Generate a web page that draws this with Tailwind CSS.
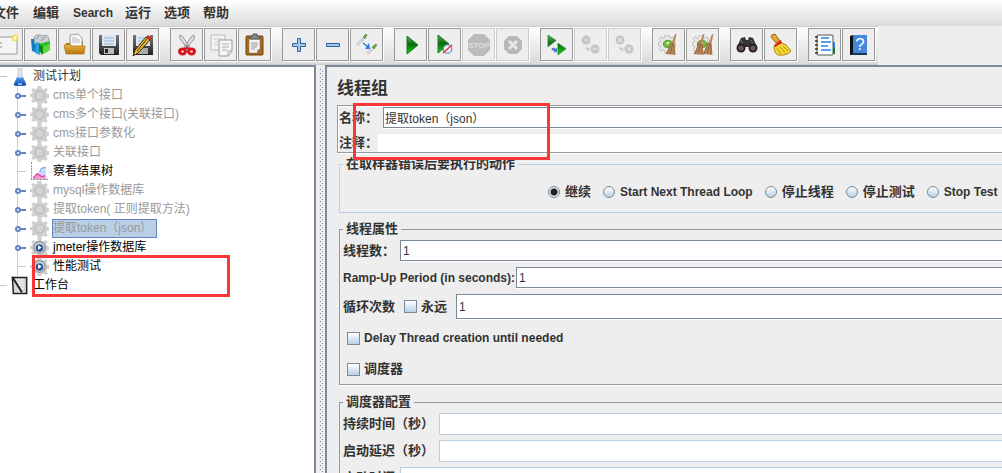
<!DOCTYPE html>
<html lang="zh-CN">
<head>
<meta charset="utf-8">
<title>Apache JMeter</title>
<script src="https://cdn.jsdelivr.net/npm/@tailwindcss/browser@4"></script>
</head>
<body class="flex h-screen flex-col overflow-hidden bg-[#eee] font-['Liberation_Sans','Noto_Sans_CJK_SC',sans-serif] text-xs text-[#333]">
<svg class="absolute size-0" aria-hidden="true">
  <defs>
    <linearGradient id="green" x1="0" y1="0" x2="0" y2="1"><stop offset="0" stop-color="#5fae5f"/><stop offset=".45" stop-color="#0b6a10"/><stop offset="1" stop-color="#12d312"/></linearGradient>
    <linearGradient id="gold" x1="0" y1="0" x2="0" y2="1"><stop offset="0" stop-color="#e8b544"/><stop offset="1" stop-color="#b9780c"/></linearGradient>
    <linearGradient id="steel" x1="0" y1="0" x2="0" y2="1"><stop offset="0" stop-color="#777"/><stop offset="1" stop-color="#222"/></linearGradient>
    <linearGradient id="flask" x1="0" y1="0" x2="0" y2="1"><stop offset="0" stop-color="#4a9cf0"/><stop offset="1" stop-color="#0b3fa8"/></linearGradient>
    <pattern id="dots" width="4" height="4" patternUnits="userSpaceOnUse"><path d="M0 0h1v1H0Zm2 2h1v1H2Z" fill="#7a8a99"/></pattern>
    <path id="play" d="M1 0 12 9 1 18Z"/>
    <path id="cog" d="M8 0h4l.6 2.800 1.700.7L16.700 2l2 2-1.500 2.400.7 1.700 2.100.600v3.600l-2.100.600-.7 1.700 1.500 2.400-2 2-2.400-1.500-1.700.7L12 20H8l-.6-2.800-1.700-.7L3.300 18l-2-2 1.500-2.400-.7-1.700L0 11.300V8.700l2.100-.600.7-1.700L1.300 4l2-2 2.400 1.500 1.700-.7Z"/>
    <symbol id="i-gear-off" viewBox="0 0 20 20"><use href="#cog" fill="#d0d0d0"/><circle cx="10" cy="10" r="5.500" fill="#c0c0c0"/><circle cx="10" cy="10" r="3.800" fill="#d3d3d3"/></symbol>
    <symbol id="i-gear" viewBox="0 0 20 20"><use href="#cog" fill="#cfcfcf"/><circle cx="10" cy="10" r="6.500" fill="#7d7d7d"/><circle cx="10" cy="10" r="5.500" fill="#cfdcee"/><circle cx="10" cy="10.500" r="4" fill="#2f5590"/><path d="m8.500 7.500 4 2.500-4 2.500Z" fill="#fff"/></symbol>
    <symbol id="i-flask" viewBox="0 0 14 18"><path d="M5 0h4v7l4 9q.5 2-1.500 2h-9Q.5 18 1 16l4-9Z" fill="#dfe4ea" stroke="#aab2bc" stroke-width=".6"/><path d="M4 9.500h6l3 6.500q.4 1.800-1.500 1.800h-9Q.6 17.800 1 16Z" fill="url(#flask)"/><path d="M5 15h4v2H5z" fill="#6db8ff"/></symbol>
    <symbol id="i-chart" viewBox="0 0 18 18"><path d="M1.500 0v16.500H17" fill="none" stroke="#888" stroke-dasharray="2 1"/><path d="m8 12 3-4 4-3v9H8Z" fill="#c4dcfa"/><path d="m3 15 4-5 4 5 3-3 2 4H3Z" fill="#f59bd5"/><path d="m3 15 4-4 4 3 3-1" fill="none" stroke="#d63eae" stroke-width="1.200"/><path d="m9 10 2-4 4-1" fill="none" stroke="#7aa2e8" stroke-width="1.200"/></symbol>
    <symbol id="i-pad" viewBox="0 0 18 20"><path d="M1 1.500h15v17H2Z" fill="#d9d9d9" stroke="#222" stroke-width="1.600"/><path d="M4 4h9M4 7h9M6 10h7M8 13h5" stroke="#f6f6f6"/><path d="m1 1 10 16" stroke="#222" stroke-width="2"/></symbol>
    <symbol id="i-tiny-play" viewBox="0 0 22 22"><path d="m1 0 9 6-9 7Zm11 9 9 6-9 7Z" fill="url(#green)" stroke="#176e1b" stroke-width=".6"/><path d="M5 15q2-2 4 0l2-1v5H7l1-1q-1-2-3-1Z" fill="#557fc0"/></symbol>
    <symbol id="i-broom" viewBox="0 0 12 22"><path d="m10 0 1.500.5L9.500 9l1 12L0 20q4-4 5-11l2-1Z" fill="#b88b5c"/><path d="m6 9-4 11M8 9 5 20M9 10v10" stroke="#80552d" stroke-width=".7"/></symbol>
    <symbol id="i-gearbig" viewBox="0 0 20 20"><use href="#cog" fill="#e7e7e7" stroke="#a5a5a5" stroke-width=".7"/><ellipse cx="11" cy="10" rx="5" ry="4" fill="#6fc13a" stroke="#4d8d25"/><circle cx="11" cy="9" r="1.500" fill="#d6f5b8"/></symbol>
  </defs>
</svg>

<nav class="flex h-[26px] shrink-0 items-center bg-linear-to-b from-white to-[#dadada] text-[13px] font-bold whitespace-nowrap" aria-label="菜单">
  <button class="-ml-[7px] w-10 text-left">文件</button>
  <button class="w-10 text-left">编辑</button>
  <button class="w-[52px] text-left text-xs">Search</button>
  <button class="w-[39px] text-left">运行</button>
  <button class="w-[39px] text-left">选项</button>
  <button class="text-left">帮助</button>
</nav>

<div role="toolbar" class="flex h-[39px] w-[878px] shrink-0 gap-2.5 overflow-hidden border-y border-[#ccc] bg-linear-to-b from-white to-[#dadada] pt-px [&_button]:mr-px [&_button]:flex [&_button]:size-[33px] [&_button]:shrink-0 [&_button]:items-center [&_button]:justify-center [&_button]:border [&_button]:border-[#999] [&_button]:bg-[#eee] [&_button]:shadow-[1px_1px_0_#fff] [&_button:disabled]:border-[#ccc] [&_svg]:overflow-visible">
  <div class="-ml-2.5 flex">
    <button aria-label="新建"><svg width="24" height="22"><path d="M-2 3h24v17H-2Z" fill="#f5f5f5" stroke="#999"/><path d="M6 8v2m0 2v2" stroke="#888"/><circle cx="20" cy="4" r="2.500" fill="#fff" stroke="#f5dc45" stroke-width="1.500"/></svg></button>
    <button aria-label="模板"><svg width="22" height="22"><path d="M1 5h7v14l-6-2Z" fill="#1876bd"/><path d="M4 3q2-3 6-2l2 1 4-1q3 1 3 5l-2 4H5Z" fill="#ccd0d2" stroke="#9aa3a9"/><path d="m6 5 3-3m2 5 4-4" stroke="#888"/><path d="m6 8 4 1v12l-5-2Z" fill="#23a6dc"/><path d="m9 10 11-3v9l-9 5Z" fill="#27c527"/><path d="m9 10 4 3v7l-4-3Z" fill="#118519"/><path d="m13 13 7-3v6l-7 4Z" fill="#59dd36"/></svg></button>
    <button aria-label="打开"><svg width="22" height="22"><path d="M2 9h3l1-2h13v13H2Z" fill="#a86d11"/><path d="m6 1 8-1 4 4v9H6Z" fill="#f8f8f8" stroke="#a0a0a0"/><path d="M8 4h5m-5 2h8m-8 2h8" stroke="#bbb"/><path d="m0 11 6-1 2 2h13l-1 8H2Z" fill="url(#gold)" stroke="#aa7114" stroke-width=".7"/></svg></button>
    <button aria-label="保存"><svg width="22" height="22"><path d="M1 1h20v20H3l-2-2Z" fill="url(#steel)"/><path d="M4 1h14v11H4Z" fill="#dce8f4"/><path d="M6 4h10M6 7h10M6 10h10" stroke="#9bb5cf"/><path d="M6 14h10v6H6Z" fill="#bbb"/><path d="M7 15h3v4H7Z" fill="#222"/></svg></button>
    <button aria-label="另存为"><svg width="22" height="22"><path d="M1 1h20v20H3l-2-2Z" fill="url(#steel)"/><path d="M4 1h14v11H4Z" fill="#dce8f4"/><path d="M6 4h10M6 7h10M6 10h10" stroke="#9bb5cf"/><path d="M6 14h10v6H6Z" fill="#aaa"/><path d="m14 3 4 3L6 19l-5 3 2-6Z" fill="#e9b832" stroke="#332611"/><path d="m15 5-10 12" stroke="#443000"/><path d="m14 3 2-2 4 3-2 2Z" fill="#d92522"/></svg></button>
  </div>
  <div class="flex">
    <button aria-label="剪切"><svg width="20" height="22"><path d="M3 1q-1 2 0 4l8 10 2-2L5 2ZM17 1q1 2 0 4L9 15l-2-2 8-11Z" fill="#ddd" stroke="#888" stroke-width=".8"/><circle cx="10" cy="12" r="1" fill="#666"/><ellipse cx="5.500" cy="17.500" rx="3" ry="2.500" fill="none" stroke="#d8131b" stroke-width="3"/><ellipse cx="14.500" cy="17.500" rx="3" ry="2.500" fill="none" stroke="#d8131b" stroke-width="3"/><path d="m7 15 3-1 3 1" fill="none" stroke="#d8131b" stroke-width="2"/></svg></button>
    <button aria-label="复制"><svg width="24" height="22"><path d="M2 1h14v15H2Z" fill="#f3f3f3" stroke="#bbb"/><path d="M5 5h8M5 8h4M5 11h4" stroke="#ccc"/><path d="M10 6h13v11l-4 5h-9Z" fill="#f6f6f6" stroke="#999"/><path d="M13 10h7m-7 3h7m-7 3h5m1 6v-5h4" fill="none" stroke="#aaa"/></svg></button>
    <button aria-label="粘贴"><svg width="20" height="22"><rect x="1" y="2" width="17" height="19" rx="1" fill="#ab681b" stroke="#744009"/><path d="M4 5h11v10l-3 4H4Z" fill="#f5f5f5" stroke="#777" stroke-width=".6"/><path d="M6 9h7m-7 2h7m-7 2h6m-6 2h4" stroke="#999"/><path d="M5 5V3l3-1V0h4v2l3 1v2Z" fill="#8b8b82" stroke="#555"/><path d="m12 19 .5-3.500H15Z" fill="#777"/></svg></button>
  </div>
  <div class="flex">
    <button aria-label="展开全部"><svg width="16" height="16"><path d="M6.500 1.500h3v5h5v3h-5v5h-3v-5h-5v-3h5Z" fill="#a5c9eb" stroke="#2a62a0"/></svg></button>
    <button aria-label="收起全部"><svg width="16" height="16"><path d="M1.500 6.500h13v3h-13Z" fill="#a5c9eb" stroke="#2a62a0"/></svg></button>
    <button aria-label="切换"><svg width="22" height="22"><path d="m1 11 7-7M11 20l6-6" stroke="#bbb" stroke-width="2.500"/><path d="m1 11 7-7M11 20l6-6" stroke="#f7f7f7"/><path d="m7 3 2 2 2-4-1-1Zm9 10 2 2 3-4-1-1Z" fill="#71a454" stroke="#5b8a48" stroke-width=".7"/><path d="m7 9 5 4" stroke="#257be8" stroke-width="1.500"/><path d="m13 9 1 6H9Z" fill="#257be8"/></svg></button>
  </div>
  <div class="flex">
    <button aria-label="启动"><svg class="ml-1" width="13" height="18"><use href="#play" fill="url(#green)" stroke="#187b1c"/></svg></button>
    <button aria-label="不停顿启动"><svg width="15" height="19"><use href="#play" fill="url(#green)" stroke="#187b1c"/><circle cx="10.500" cy="14" r="4.300" fill="#e7eef8" stroke="#5579af"/><path d="m6 18 9-8" stroke="#d92b2b" stroke-width="1.400"/></svg></button>
    <button disabled aria-label="停止"><svg width="24" height="24"><path d="M7 1h10l6 6v10l-6 6H7l-6-6V7Z" fill="#bbb"/><text x="12" y="15" text-anchor="middle" fill="#ddd" font-size="8" font-weight="bold">STOP</text></svg></button>
    <button disabled aria-label="关闭"><svg width="18" height="18"><path d="M5 0h8l5 5v8l-5 5H5l-5-5V5Z" fill="#b8b8b8"/><path d="m5 5 8 8m0-8-8 8" stroke="#e8e8e8" stroke-width="3"/></svg></button>
  </div>
  <div class="flex">
    <button aria-label="远程启动全部"><svg width="20" height="22"><use href="#i-tiny-play" width="20" height="20" y="1"/></svg></button>
    <button disabled aria-label="远程停止全部"><svg width="20" height="22"><circle cx="5" cy="6" r="4.500" fill="#c5c5c5"/><circle cx="14" cy="15" r="4.500" fill="#c5c5c5"/><path d="M2.500 6h5m4 9h5" stroke="#dedede" stroke-width="1.500"/><path d="m4 13 4 1 1 3-4-1Z" fill="#ccc"/></svg></button>
    <button disabled aria-label="远程关闭全部"><svg width="20" height="22"><circle cx="5" cy="6" r="4.500" fill="#c5c5c5"/><circle cx="14" cy="15" r="4.500" fill="#c5c5c5"/><path d="m3 4 4 4m0-4L3 8m9 5 4 4m0-4-4 4" stroke="#e3e3e3" stroke-width="1.300"/><path d="m4 13 4 1 1 3-4-1Z" fill="#ccc"/></svg></button>
  </div>
  <div class="flex">
    <button aria-label="清除"><svg width="22" height="22"><use href="#i-gearbig" width="18" height="18" y="1"/><use href="#i-broom" x="7" width="12" height="22"/></svg></button>
    <button aria-label="清除全部"><svg width="22" height="22"><use href="#i-gearbig" width="18" height="18" y="1"/><use href="#i-broom" x="1" width="12" height="22"/><use href="#i-broom" x="10" width="12" height="22"/></svg></button>
  </div>
  <div class="flex">
    <button aria-label="查找"><svg width="22" height="16"><path d="m5 1 4-1 1 3h2l1-3 4 1 4 9H1Z" fill="#333"/><path d="m5 3 2 5m8-5 2 4" stroke="#777"/><circle cx="5" cy="11" r="4.500" fill="#222"/><circle cx="17" cy="11" r="4.500" fill="#222"/><circle cx="5" cy="11" r="2.600" fill="#71564c"/><circle cx="17" cy="11" r="2.600" fill="#71564c"/></svg></button>
    <button aria-label="重置查找"><svg width="22" height="22"><path d="m2 1 3-1 5 7-4 2-5-6Z" fill="#e5a63a" stroke="#9a6114"/><path d="m10 8 6 3 5 6q-4 5-13 4-4-2-4-9Z" fill="#f5d835" stroke="#a7820b"/><path d="m7 14 4 6m-1-7 5 6m-2-7 5 5" stroke="#bb930d"/><path d="m4 11 7-5 1 3-7 4Z" fill="#df2425"/></svg></button>
  </div>
  <div class="flex">
    <button aria-label="函数助手"><svg width="22" height="22"><path d="M18 8h3v6h-3Z" fill="#258de9"/><path d="M18 14h3v6h-3Z" fill="#167a22"/><rect x="3" y="1" width="16" height="20" rx="1" fill="#fff" stroke="#555"/><path d="M7 4h8M7 8h10M7 12h7M7 16h10" stroke="#2680ea" stroke-width="1.300"/><path d="M1 3h3M1 7h3M1 11h3M1 15h3M1 19h3" stroke="#333" stroke-width="1.500"/></svg></button>
    <button aria-label="帮助"><svg width="20" height="22"><path d="m1 2 3-1v20H1Z" fill="#111"/><path d="M4 1h14v18H4Z" fill="#4486d8"/><path d="M3 19h15v2H3Z" fill="#203653"/><text x="11" y="16" text-anchor="middle" fill="#fff" font-size="17">?</text></svg></button>
  </div>
</div>

<main class="flex min-h-0 flex-1">
  <aside class="relative w-[316px] shrink-0 border-t-2 border-r-2 border-[#7a8a99] bg-white [&_svg]:shrink-0">
    <ul class="leading-[19px] whitespace-nowrap">
      <li>
        <div class="flex h-[19px] items-center"><span class="mr-1.5 h-px w-[7px] bg-[#a9c1dc]"></span><svg width="14" height="18"><use href="#i-flask"/></svg><span class="ml-1.5">测试计划</span></div>
        <ul class="ml-[17px] text-[#999] [&>li]:flex [&>li]:h-[19px] [&>li]:items-center [&>li]:border-l [&>li]:border-[#b8cfe5]">
          <li><i class="-ml-[3px] size-[6px] rounded-full border-2 border-[#6382bf] bg-white"></i><i class="mr-1 h-0.5 w-[5px] bg-[#6382bf]"></i><svg class="mr-1" width="19" height="19"><use href="#i-gear-off"/></svg>cms单个接口</li>
          <li><i class="-ml-[3px] size-[6px] rounded-full border-2 border-[#6382bf] bg-white"></i><i class="mr-1 h-0.5 w-[5px] bg-[#6382bf]"></i><svg class="mr-1" width="19" height="19"><use href="#i-gear-off"/></svg>cms多个接口(关联接口)</li>
          <li><i class="-ml-[3px] size-[6px] rounded-full border-2 border-[#6382bf] bg-white"></i><i class="mr-1 h-0.5 w-[5px] bg-[#6382bf]"></i><svg class="mr-1" width="19" height="19"><use href="#i-gear-off"/></svg>cms接口参数化</li>
          <li><i class="-ml-[3px] size-[6px] rounded-full border-2 border-[#6382bf] bg-white"></i><i class="mr-1 h-0.5 w-[5px] bg-[#6382bf]"></i><svg class="mr-1" width="19" height="19"><use href="#i-gear-off"/></svg>关联接口</li>
          <li class="text-black"><i class="mr-1 h-px w-2 bg-[#b8cfe5]"></i><svg class="mr-1" width="19" height="19"><use href="#i-chart"/></svg>察看结果树</li>
          <li><i class="-ml-[3px] size-[6px] rounded-full border-2 border-[#6382bf] bg-white"></i><i class="mr-1 h-0.5 w-[5px] bg-[#6382bf]"></i><svg class="mr-1" width="19" height="19"><use href="#i-gear-off"/></svg>mysql操作数据库</li>
          <li><i class="-ml-[3px] size-[6px] rounded-full border-2 border-[#6382bf] bg-white"></i><i class="mr-1 h-0.5 w-[5px] bg-[#6382bf]"></i><svg class="mr-1" width="19" height="19"><use href="#i-gear-off"/></svg>提取token( 正则提取方法)</li>
          <li><i class="-ml-[3px] size-[6px] rounded-full border-2 border-[#6382bf] bg-white"></i><i class="mr-1 h-0.5 w-[5px] bg-[#6382bf]"></i><svg class="mr-[3px]" width="19" height="19"><use href="#i-gear-off"/></svg><span class="border border-[#6382bf] bg-[#b8cfe5] pr-1 leading-[17px]">提取token（json）</span></li>
          <li class="text-black"><i class="-ml-[3px] size-[6px] rounded-full border-2 border-[#6382bf] bg-white"></i><i class="mr-1 h-0.5 w-[5px] bg-[#6382bf]"></i><svg class="mr-1" width="19" height="19"><use href="#i-gear"/></svg>jmeter操作数据库</li>
          <li class="text-black"><i class="mr-1 h-px w-2 bg-[#b8cfe5]"></i><svg class="mr-1" width="19" height="19"><use href="#i-gear"/></svg>性能测试</li>
        </ul>
      </li>
      <li class="flex h-[19px] items-center text-black"><span class="mr-1 h-px w-[7px] bg-[#b8cfe5]"></span><svg class="mr-1" width="18" height="19"><use href="#i-pad"/></svg>工作台</li>
    </ul>
    <div class="pointer-events-none absolute top-[188px] left-8 h-[42px] w-[198px] border-3 border-[#f93737]"></div>
  </aside>
  <svg class="h-full w-[9px] shrink-0" aria-hidden="true"><rect x="3" y="4" width="4" height="100%" fill="url(#dots)"/></svg>

  <section class="relative min-w-0 flex-1 overflow-hidden border-t-2 border-l-2 border-[#7a8a99] pl-2.5 [&_label]:shrink-0">
    <h1 class="pt-[9px] pb-1 text-[17px] leading-[25px] font-bold">线程组</h1>
    <div class="border border-r-0 border-[#999] shadow-[0_1px_0_#fff,inset_1px_1px_0_#fff]">
      <div class="flex h-[22px] items-center pt-px pl-px">
        <label for="name" class="w-11 text-[13px] font-bold">名称：</label>
        <input id="name" value="提取token（json）" class="h-[21px] min-w-0 flex-1 border border-r-0 border-[#7a8a99] bg-white px-px text-[#333] shadow-[0_1px_0_#fff]">
      </div>
      <div class="mt-1.5 flex h-[18px] items-center pl-px">
        <label for="comment" class="w-[39px] text-[13px] leading-[18px] font-bold">注释：</label>
        <input id="comment" class="h-[18px] min-w-0 flex-1 bg-white">
      </div>
    </div>
    <fieldset class="mt-[3px] ml-0.5 h-[57px] border border-t-0 border-r-0 border-[#b8cfe5]">
      <legend class="flex h-4 w-full items-center gap-[3px] text-[13px] leading-4 font-bold before:h-px before:w-[3px] before:bg-[#b8cfe5] after:h-px after:flex-1 after:bg-[#b8cfe5]">在取样器错误后要执行的动作</legend>
      <div class="mt-3 flex h-4 items-center gap-3 pl-[208px] text-[13px] leading-4 font-bold whitespace-nowrap [&_input]:size-3 [&_input]:shrink-0 [&_input]:appearance-none [&_input]:rounded-full [&_input]:border [&_input]:border-[#7a8a99] [&_input]:bg-linear-to-b [&_input]:from-white [&_input]:to-[#b8cfe5] [&_label]:flex [&_label]:items-center [&_label]:gap-[5px]">
        <label><input type="radio" name="err" checked class="checked:bg-[radial-gradient(#222_0_3px,#dfe9f3_4px)]">继续</label>
        <label class="text-xs"><input type="radio" name="err">Start Next Thread Loop</label>
        <label><input type="radio" name="err">停止线程</label>
        <label><input type="radio" name="err">停止测试</label>
        <label class="text-xs"><input type="radio" name="err">Stop Test</label>
      </div>
    </fieldset>
    <fieldset class="mt-2 ml-0.5 border border-t-0 border-r-0 border-[#999] pb-[7px] pl-[3px] text-[13px] font-bold shadow-[0_1px_0_#fff] [&_input]:font-normal [&_input]:text-xs [&_input[type=checkbox]]:size-[13px] [&_input[type=checkbox]]:shrink-0 [&_input[type=checkbox]]:appearance-none [&_input[type=checkbox]]:border [&_input[type=checkbox]]:border-[#7a8a99] [&_input[type=checkbox]]:bg-linear-to-b [&_input[type=checkbox]]:from-white [&_input[type=checkbox]]:to-[#b8cfe5]">
      <legend class="-ml-[3px] flex h-4 w-[calc(100%+3px)] items-center gap-[3px] leading-4 before:h-px before:w-[3px] before:bg-[#999] after:h-px after:flex-1 after:bg-[#999]">线程属性</legend>
      <div class="mt-[3px] flex h-[21px] items-center"><label for="threads" class="w-[57px]">线程数：</label><input id="threads" value="1" class="h-[21px] min-w-0 flex-1 border border-r-0 border-[#7a8a99] bg-white px-0.5 shadow-[0_1px_0_#fff]"></div>
      <div class="mt-1.5 flex h-[21px] items-center"><label for="ramp" class="w-[173px] text-xs">Ramp-Up Period (in seconds):</label><input id="ramp" value="1" class="h-[21px] min-w-0 flex-1 border border-r-0 border-[#7a8a99] bg-white px-0.5 shadow-[0_1px_0_#fff]"></div>
      <div class="mt-1.5 flex h-[25px] items-center"><label for="loops" class="w-[61px]">循环次数</label><label class="flex w-[52px] items-center gap-1"><input type="checkbox">永远</label><input id="loops" value="1" class="h-[25px] min-w-0 flex-1 border border-r-0 border-[#7a8a99] bg-white px-0.5 shadow-[0_1px_0_#fff]"></div>
      <label class="mt-[11px] ml-1 flex h-4 items-center gap-1 text-xs"><input type="checkbox">Delay Thread creation until needed</label>
      <label class="mt-[15px] ml-1 flex h-4 items-center gap-1 leading-4"><input type="checkbox">调度器</label>
    </fieldset>
    <fieldset class="mt-[9px] ml-0.5 border-l border-[#999] pl-[3px] text-[13px] font-bold">
      <legend class="-ml-[3px] flex h-4 w-[calc(100%+3px)] items-center gap-[3px] leading-4 before:h-px before:w-[3px] before:bg-[#999] after:h-px after:flex-1 after:bg-[#999]">调度器配置</legend>
      <div class="mt-[3px] flex h-[22px] items-center"><label for="dur" class="w-24">持续时间（秒）</label><input id="dur" class="h-[22px] min-w-0 flex-1 border border-r-0 border-[#b8cfe5] bg-white"></div>
      <div class="mt-[5px] flex h-[22px] items-center"><label for="delay" class="w-24">启动延迟（秒）</label><input id="delay" class="h-[22px] min-w-0 flex-1 border border-r-0 border-[#b8cfe5] bg-white"></div>
      <div class="mt-[5px] flex h-[22px] items-center"><label for="start" class="w-[57px]">启动时间</label><input id="start" class="h-[22px] min-w-0 flex-1 border border-r-0 border-[#b8cfe5] bg-white"></div>
    </fieldset>
    <div class="pointer-events-none absolute top-9 left-[26px] h-[57px] w-[197px] border-3 border-[#f93737]"></div>
  </section>
</main>
</body>
</html>
